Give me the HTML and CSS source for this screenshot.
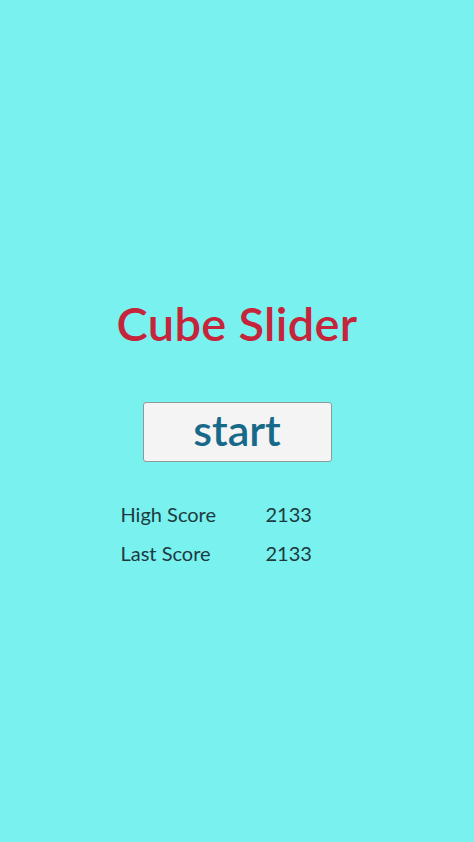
FILE: index.html
```html
<!DOCTYPE html>
<html lang="en">
<head>
  <meta charset="UTF-8" />
  <meta name="viewport" content="width=device-width, initial-scale=1.0" />
  <title>Cube Slider</title>
  <link rel="stylesheet" href="styles.css">
</head>
<body>
  <main class="menu">
    <h1 class="title">Cube Slider</h1>

    <button class="start-button">start</button>

    <div class="scores">
      <div class="score-row">
        <span class="score-label">High Score</span>
        <span class="score-value">2133</span>
      </div>
      <div class="score-row">
        <span class="score-label">Last Score</span>
        <span class="score-value">2133</span>
      </div>
    </div>
  </main>
</body>
</html>
```

FILE: styles.css
```css
:root {
  --bg-color: #78f1ef;
  --title-color: #c6243a;
  --button-text: #17698a;
  --score-color: #1d3a40;
}

* {
  margin: 0;
  padding: 0;
  box-sizing: border-box;
  font-family: 'Lato', 'Noto Sans', sans-serif;
}

html,
body {
  height: 100%;
}

body {
  background-color: var(--bg-color);
  overflow: hidden;
}

.menu {
  display: flex;
  flex-direction: column;
  align-items: center;
  padding-top: 290px;
}

.title {
  color: var(--title-color);
  font-size: 47px;
  font-weight: 600;
  line-height: 66px;
  letter-spacing: 0.3px;
}

.start-button {
  margin-top: 46px;
  width: 189px;
  height: 60px;
  background-color: #f4f4f4;
  border: 1px solid #8d9a9a;
  border-radius: 3px;
  color: var(--button-text);
  font-size: 43px;
  font-weight: 600;
  line-height: 54px;
  padding-bottom: 4px;
  cursor: pointer;
}

.scores {
  margin-top: 38px;
  margin-right: 46px;
  display: flex;
  flex-direction: column;
  gap: 11px;
}

.score-row {
  display: grid;
  grid-template-columns: 145px 42px;
  color: var(--score-color);
  font-size: 20px;
  line-height: 28px;
}
```
